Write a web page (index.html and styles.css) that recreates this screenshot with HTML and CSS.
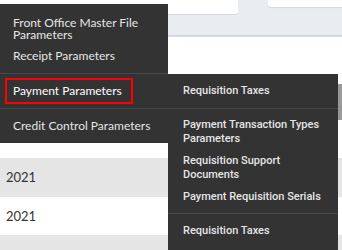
FILE: index.html
```html
<!DOCTYPE html>
<html lang="en">
<head>
  <meta charset="UTF-8">
  <link rel="stylesheet" href="styles.css">
  <title>Payment Parameters</title>
</head>
<body>

  <div class="page">
    <header class="toolbar">
      <div class="card card-left"></div>
      <div class="card card-right"></div>
    </header>
    <div class="grid">
      <div class="row"><span class="cell">2021</span></div>
      <div class="row"><span class="cell">2021</span></div>
      <div class="row"><span class="cell">2021</span><span class="cell cell-right">210</span></div>
    </div>
    <div class="side-tab"></div>
  </div>

  <nav class="menu">
    <ul class="menu-group">
      <li class="menu-item">Front Office Master File Parameters</li>
      <li class="menu-item">Receipt Parameters</li>
    </ul>
    <ul class="menu-group">
      <li class="menu-item active">Payment Parameters</li>
    </ul>
    <ul class="menu-group">
      <li class="menu-item">Credit Control Parameters</li>
    </ul>
  </nav>

  <nav class="submenu">
    <ul class="submenu-group">
      <li class="submenu-item">Requisition Taxes</li>
    </ul>
    <ul class="submenu-group">
      <li class="submenu-item">Payment Transaction Types Parameters</li>
      <li class="submenu-item">Requisition Support Documents</li>
      <li class="submenu-item">Payment Requisition Serials</li>
    </ul>
    <ul class="submenu-group">
      <li class="submenu-item">Requisition Taxes</li>
    </ul>
  </nav>

</body>
</html>
```

FILE: styles.css
```css
body {
  margin: 0;
  background-color: #fff;
  font-family: 'Lato', sans-serif;
  overflow: hidden;
}

.page {
  position: relative;
  height: 250px;
}

.toolbar {
  display: flex;
  justify-content: space-between;
  height: 35px;
  background-color: #e9ecf1;
  border-bottom: 2px solid #d5d8de;
}

.card {
  background-color: #fff;
  box-shadow: 0 1px 1px #d6d9de;
}

.card-left {
  width: 238px;
  height: 14px;
  border-radius: 0 0 3px 0;
}

.card-right {
  width: 74px;
  height: 7px;
  border-radius: 0 0 0 3px;
}

.grid {
  padding-top: 121px;
}

.row {
  display: flex;
  justify-content: space-between;
  height: 38.5px;
  align-items: center;
  padding: 0 6px;
  font-size: 13px;
  color: #333;
}

.row:nth-child(odd) {
  background-color: #e5e5e5;
}

.row:last-child {
  align-items: flex-end;
}

.cell-right {
  margin-right: 40px;
  margin-bottom: -9px;
}

.side-tab {
  position: absolute;
  top: 84px;
  right: 0;
  width: 4px;
  height: 36px;
  background-color: #999;
}

.menu,
.submenu {
  position: absolute;
  background-color: #333;
  color: #e6e6e6;
}

.menu {
  top: 4px;
  left: 0;
  width: 168px;
  font-size: 12px;
}

.submenu {
  top: 74px;
  left: 168px;
  width: 170px;
  height: 190px;
  font-family: 'Roboto', sans-serif;
  font-weight: 500;
  font-size: 11px;
}

ul {
  margin: 0;
  padding: 0;
  list-style: none;
}

.menu-group {
  padding: 8px 0 6px;
  border-bottom: 1px solid #474747;
}

.menu-group:first-child .menu-item:first-child {
  padding-bottom: 4px;
}

.menu-group:nth-child(2) {
  padding: 4px 0;
}

.menu-group:last-child {
  padding: 6px 0;
  border-bottom: none;
}

.menu-item {
  padding: 5px 13px;
  line-height: 12px;
}

.menu-item.active {
  margin: 0 35px 0 5px;
  padding: 5px 6px;
  border: 2px solid #f00;
  color: #fff;
  white-space: nowrap;
}

.submenu-group {
  padding: 5px 0;
  border-bottom: 1px solid #474747;
}

.submenu-group:first-child,
.submenu-group:last-child {
  padding: 6px 0;
}

.submenu-group:last-child {
  border-bottom: none;
}

.submenu-item {
  padding: 4px 10px 4px 15px;
  line-height: 14px;
}
```
